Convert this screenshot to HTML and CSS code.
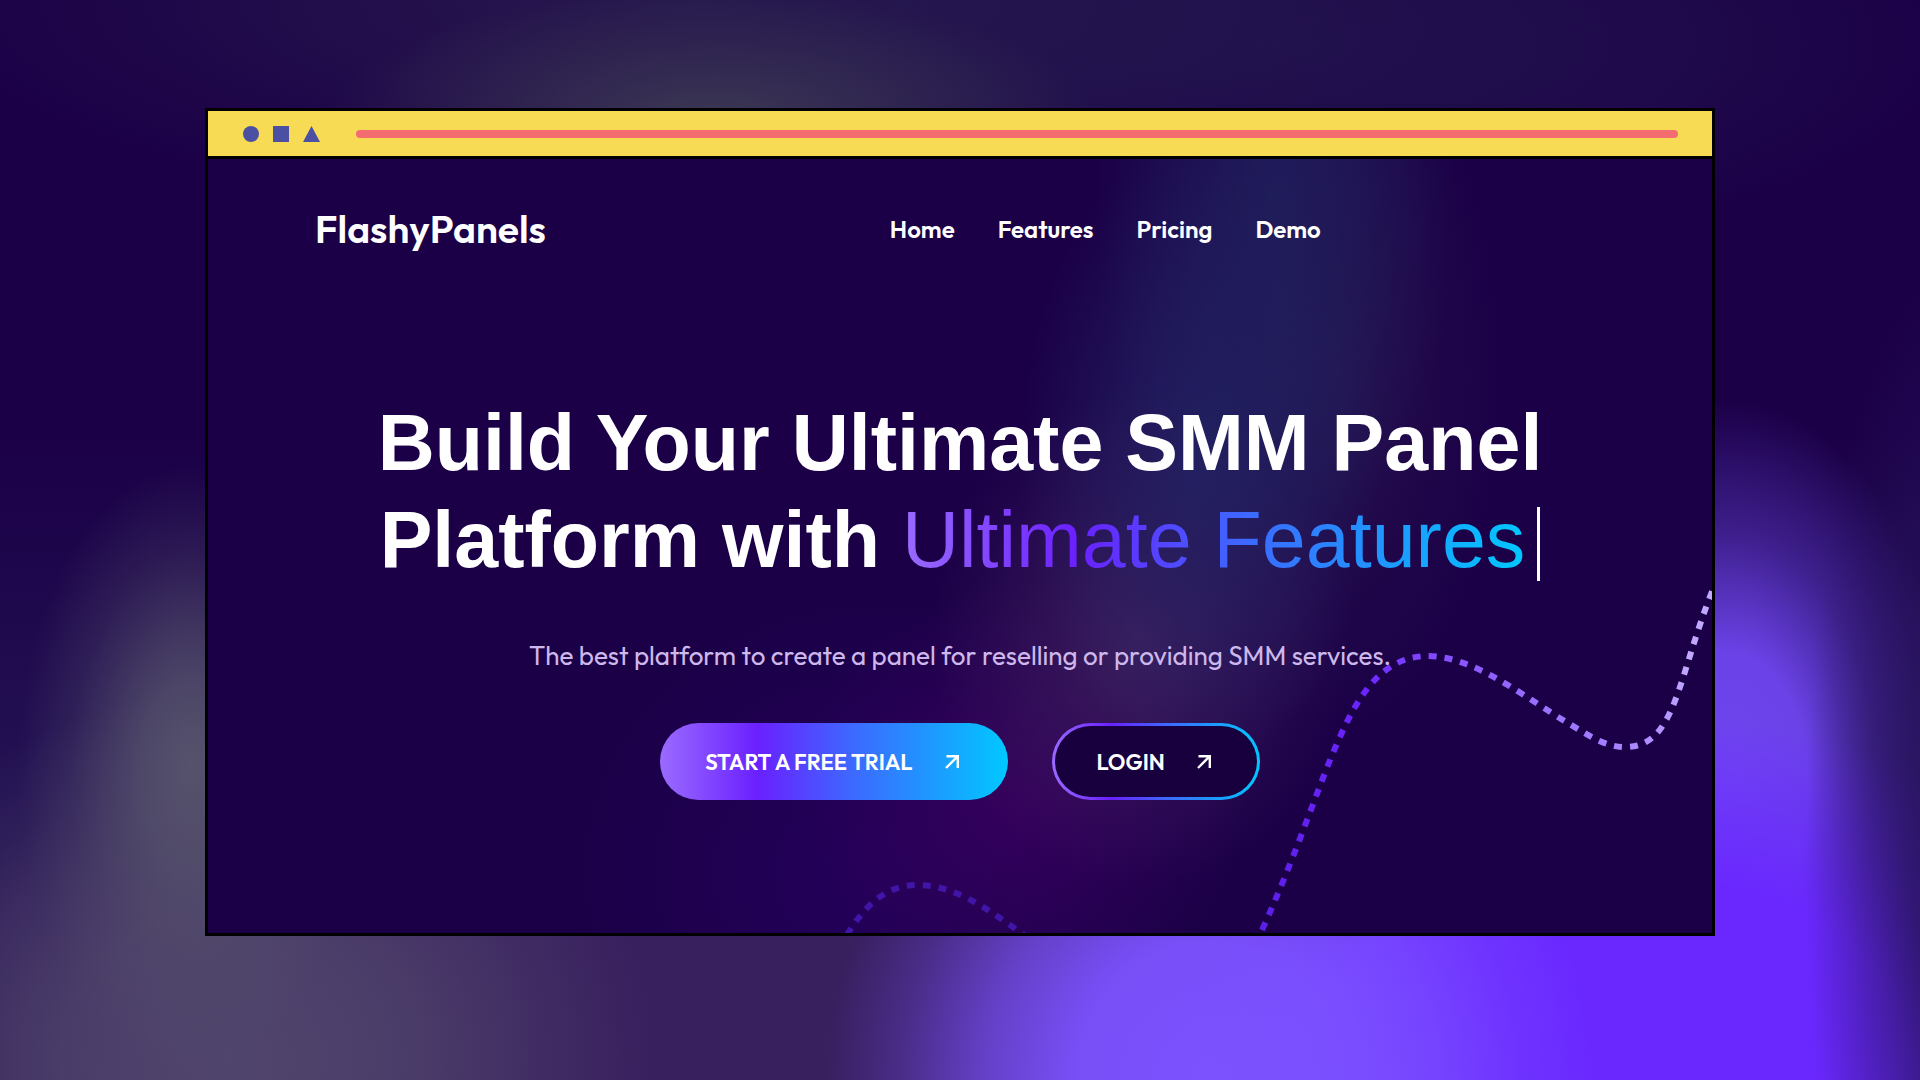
FILE: index.html
```html
<!DOCTYPE html>
<html lang="en">
<head>
<meta charset="utf-8">
<meta name="viewport" content="width=device-width, initial-scale=1">
<title>FlashyPanels</title>
<link rel="stylesheet" href="styles.css">
</head>
<body>
<div class="stage">
  <div class="window">
    <div class="titlebar">
      <svg class="shapes" viewBox="0 0 77 16" width="77" height="16" aria-hidden="true">
        <circle cx="8" cy="8" r="8"/>
        <rect x="30" width="16" height="16"/>
        <path d="M68.500 0 L77 16 H60 Z"/>
      </svg>
      <div class="address"></div>
    </div>
    <div class="page">
      <svg class="waves" viewBox="0 0 1504 774" preserveAspectRatio="xMaxYMax slice" aria-hidden="true">
        <defs>
          <linearGradient id="wave" gradientUnits="userSpaceOnUse" x1="1053" y1="774" x2="1504" y2="550">
            <stop offset="0" stop-color="#5c1fe6"/>
            <stop offset="0.4" stop-color="#6c24ff"/>
            <stop offset="0.7" stop-color="#9a70ff"/>
            <stop offset="1" stop-color="#c0a8ff"/>
          </linearGradient>
        </defs>
        <path class="wave" stroke="url(#wave)" d="M1054 771 C1081 712 1099 660 1120 606 C1141 555 1165 497 1220 497 C1267 497 1322 542 1360 564 C1380 576 1397 588 1417 588 C1468 588 1469 520 1505 430"/>
        <path class="wave" stroke="#4015a8" d="M639 776 C656 748 677 726 709 726 C746 726 777 748 816 776"/>
      </svg>
      <header class="header">
        <a class="logo" href="#">FlashyPanels</a>
        <nav class="nav">
          <a href="#">Home</a>
          <a href="#">Features</a>
          <a href="#">Pricing</a>
          <a href="#">Demo</a>
        </nav>
      </header>
      <main class="hero">
        <h1 class="headline">Build Your Ultimate SMM Panel<br>Platform with <span class="accent">Ultimate Features</span><span class="caret"></span></h1>
        <p class="lead">The best platform to create a panel for reselling or providing SMM services.</p>
        <div class="actions">
          <button class="button primary" type="button">START A FREE TRIAL
            <svg class="arrow" viewBox="0 0 14 14" width="14" height="14" aria-hidden="true"><path d="M1.500 1.200 H12.800 V13 M12.800 1.200 L1 13"/></svg>
          </button>
          <button class="button outline" type="button">LOGIN
            <svg class="arrow" viewBox="0 0 14 14" width="14" height="14" aria-hidden="true"><path d="M1.500 1.200 H12.800 V13 M12.800 1.200 L1 13"/></svg>
          </button>
        </div>
      </main>
    </div>
  </div>
</div>
</body>
</html>
```
FILE: styles.css
```css
* {
  box-sizing: border-box;
}

body {
  margin: 0;
  font-family: Outfit, Lato, sans-serif;
  color: #fff;
  background: #1b0047;
}

.stage {
  min-height: 100vh;
  padding: 108px 205px 144px;
  background:
    radial-gradient(ellipse 20% 12% at 37% 11%, #3c3854 0%, #3c385499 40%, #3c385400 100%),
    radial-gradient(ellipse 36% 20% at 66% 4%, #241a5099 0%, #241a5066 60%, #241a5000 100%),
    radial-gradient(ellipse 40% 20% at 36% 0%, #2b2150bb 0%, #2b215066 50%, #2b215000 100%),
    radial-gradient(ellipse 8% 56% at 102% 80%, #28145e 0%, #28145ecc 30%, #28145e00 100%),
    radial-gradient(ellipse 20% 36% at 63% 100%, #7c52ff 0%, #7c52ffee 35%, #7c52ffaa 58%, #7c52ff44 80%, #7c52ff00 100%),
    radial-gradient(ellipse 30% 30% at 84% 96%, #6a28ff 0%, #6a28ff 50%, #6a28ff00 100%),
    radial-gradient(ellipse 12% 36% at 90% 73%, #7046f2 0%, #7046f2ee 35%, #7046f266 65%, #7046f200 100%),
    radial-gradient(ellipse 9% 28% at 10% 71%, #56526c 0%, #56526ccc 30%, #56526c44 70%, #56526c00 100%),
    radial-gradient(ellipse 22% 34% at 12% 98%, #50456c 0%, #50456ccc 40%, #50456c00 100%),
    radial-gradient(ellipse 45% 34% at 34% 100%, #381f5e 0%, #381f5e 55%, #381f5e00 100%),
    linear-gradient(180deg, #1b0047 0%, #1b0047 40%, #221052 70%, #221052 100%);
}

.window {
  border: 3px solid #000;
}

.titlebar {
  display: flex;
  align-items: center;
  gap: 36px;
  height: 48px;
  padding: 0 34px 0 35px;
  background: #f8db54;
  border-bottom: 3px solid #000;
}

.shapes {
  flex: none;
  fill: #4b50a2;
}

.address {
  flex: 1;
  height: 8px;
  border-radius: 4px;
  background: #f36d70;
}

.page {
  position: relative;
  overflow: hidden;
  padding: 36px 0 133px;
  background:
    radial-gradient(ellipse 12% 50% at 71% 4%, #20225fcc 0%, #20225f77 50%, #20225f00 100%),
    radial-gradient(ellipse 12% 40% at 66% 38%, #232464dd 0%, #23246488 45%, #23246400 100%),
    radial-gradient(ellipse 11% 46% at 75% 28%, #2c1a5099 0%, #2c1a5000 100%),
    radial-gradient(ellipse 14% 32% at 62% 62%, #3e1e5e 0%, #3e1e5e88 45%, #3e1e5e00 100%),
    radial-gradient(ellipse 15% 28% at 54% 83%, #35005c 0%, #35005c88 45%, #35005c00 100%),
    radial-gradient(ellipse 20% 36% at 44% 92%, #23005a 0%, #23005a00 100%),
    #1b0047;
}

.waves {
  position: absolute;
  inset: 0;
  width: 100%;
  height: 100%;
}

.wave {
  fill: none;
  stroke-width: 6;
  stroke-dasharray: 8 8;
}

.header,
.hero {
  position: relative;
}

.header {
  display: grid;
  grid-template-columns: 38% 1fr;
  align-items: center;
  padding-left: 107px;
}

.header a {
  color: inherit;
  text-decoration: none;
}

.logo {
  font-size: 39px;
  line-height: 68px;
  font-weight: 600;
}

.nav {
  display: flex;
  gap: 43px;
  margin-left: 44px;
  font-size: 24px;
  line-height: 32px;
  font-weight: 600;
}

.hero {
  display: flex;
  flex-direction: column;
  align-items: center;
  padding-top: 131px;
  text-align: center;
}

.headline {
  margin: 0;
  font-family: Arial, "Liberation Sans", sans-serif;
  font-size: 79px;
  line-height: 97px;
  font-weight: 700;
}

.accent {
  font-weight: 400;
  color: transparent;
  background: linear-gradient(90deg, #9a6bff 0%, #6a20ff 28%, #3d68ff 55%, #00c8ff 100%);
  background-clip: text;
  -webkit-background-clip: text;
}

.caret {
  display: inline-block;
  width: 3px;
  height: 74px;
  margin-left: 12px;
  vertical-align: -14px;
  background: #fff;
}

.lead {
  margin: 48px 0 0;
  font-size: 26px;
  line-height: 40px;
  color: #cdb8ec;
}

.actions {
  display: flex;
  gap: 44px;
  margin-top: 47px;
}

.button {
  display: flex;
  align-items: center;
  gap: 32px;
  height: 77px;
  padding: 0 46px 0 42px;
  border: 3px solid transparent;
  border-radius: 39px;
  font: inherit;
  font-size: 22px;
  font-weight: 600;
  color: #fff;
}

.primary {
  background: linear-gradient(90deg, #9a6bff 0%, #6a20ff 28%, #3d68ff 55%, #00c8ff 100%) border-box;
}

.outline {
  background:
    linear-gradient(#18003f, #18003f) padding-box,
    linear-gradient(90deg, #9a6bff 0%, #6a20ff 28%, #3d68ff 55%, #00c8ff 100%) border-box;
}

.arrow {
  fill: none;
  stroke: #fff;
  stroke-width: 2.4;
}
```
